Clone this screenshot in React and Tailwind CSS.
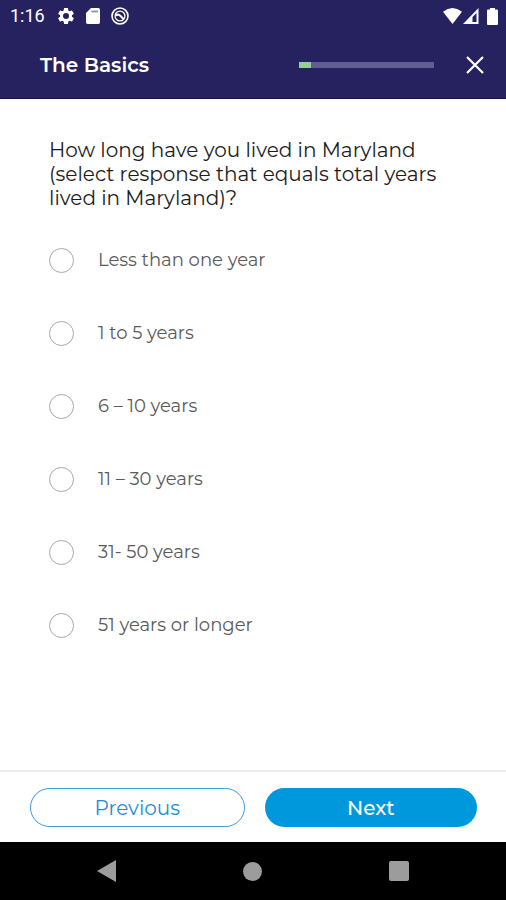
import React, { useState } from "react";

const OPTIONS = [
  "Less than one year",
  "1 to 5 years",
  "6 – 10 years",
  "11 – 30 years",
  "31- 50 years",
  "51 years or longer",
];

function StatusBar() {
  return (
    <div className="flex h-8 items-center justify-between pl-[10px] pr-2">
      <div className="flex items-center">
        <span className="w-[46px] font-[Roboto,sans-serif] text-[18px] leading-8">1:16</span>
        <svg className="size-5" viewBox="0 0 24 24" fill="currentColor" aria-hidden="true">
          <path d="M19.14 12.94c.04-.3.06-.61.06-.94 0-.32-.02-.64-.07-.94l2.03-1.58a.49.49 0 0 0 .12-.61l-1.92-3.32a.49.49 0 0 0-.59-.22l-2.39.96a7 7 0 0 0-1.62-.94l-.36-2.54a.48.48 0 0 0-.48-.41h-3.84c-.24 0-.43.17-.47.41l-.36 2.54c-.59.24-1.13.57-1.62.94l-2.39-.96a.48.48 0 0 0-.59.22L2.74 8.87c-.12.21-.08.47.12.61l2.03 1.58c-.05.3-.09.63-.09.94s.02.64.07.94l-2.03 1.58a.49.49 0 0 0-.12.61l1.92 3.32c.12.22.37.29.59.22l2.39-.96c.5.38 1.03.7 1.62.94l.36 2.54c.05.24.24.41.48.41h3.84c.24 0 .44-.17.47-.41l.36-2.54c.59-.24 1.13-.56 1.62-.94l2.39.96c.22.08.47 0 .59-.22l1.92-3.32a.49.49 0 0 0-.12-.61zM12 15.6a3.6 3.6 0 1 1 0-7.2 3.6 3.6 0 0 1 0 7.2z" />
        </svg>
        <svg className="ml-[10px] h-4 w-[14px]" viewBox="0 0 14 16" aria-hidden="true">
          <path d="M5 0h7.300q1.700 0 1.700 1.700v12.600q0 1.700-1.700 1.700H1.700Q0 16 0 14.300V5z" fill="currentColor" />
          <path d="M5.500 3.500h6.500" stroke="#8f8eb2" strokeWidth="1.800" />
        </svg>
        <svg className="ml-[11px] size-[18px]" viewBox="0 0 18 18" fill="none" stroke="currentColor" aria-hidden="true">
          <circle cx="9" cy="9" r="8" strokeWidth="1.600" />
          <circle cx="9" cy="9" r="4.900" strokeWidth="1.300" />
          <path d="M4.500 8.500Q7.500 6.500 9.500 9L13 12.500" strokeWidth="2" />
        </svg>
      </div>
      <div className="flex items-center">
        <svg className="h-4 w-[19px]" viewBox="0 0 19 16" fill="currentColor" aria-hidden="true">
          <path d="M0 3.700Q9.500-3.500 19 3.700L9.500 16z" />
        </svg>
        <svg className="ml-px size-4" viewBox="0 0 16 16" aria-hidden="true">
          <path d="M15.500 0v16H0z" fill="currentColor" />
          <path d="M13.500 5v9H9.500V9z" fill="#25225f" />
        </svg>
        <svg className="ml-2 h-[17px] w-[11px]" viewBox="0 0 11 17" fill="currentColor" aria-hidden="true">
          <path d="M3 0h5v1.500H10q1 0 1 1V16q0 1-1 1H1q-1 0-1-1V2.500q0-1 1-1h2z" />
        </svg>
      </div>
    </div>
  );
}

function AppBar() {
  return (
    <div className="flex h-[66px] items-center pl-10 pr-[22px]">
      <h1 className="flex-1 text-[20px] font-semibold leading-6">The Basics</h1>
      <div
        className="h-[6px] w-[135px] bg-[#605d93]"
        role="progressbar"
        aria-label="Survey progress"
        aria-valuemin={0}
        aria-valuemax={100}
        aria-valuenow={9}
      >
        <div className="h-full w-[12px] bg-[#8fd293]" />
      </div>
      <button type="button" aria-label="Close" className="ml-8 flex size-[18px] items-center justify-center">
        <svg className="size-[18px]" viewBox="0 0 18 18" fill="none" stroke="currentColor" strokeWidth="2.200" aria-hidden="true">
          <path d="M1 1l16 16M17 1L1 17" />
        </svg>
      </button>
    </div>
  );
}

export default function App() {
  const [answer, setAnswer] = useState(null);
  return (
    <div className="flex min-h-screen flex-col bg-white font-[Montserrat,Inter,sans-serif]">
      <header className="border-b border-[#17134f] bg-[#25225f] text-white">
        <StatusBar />
        <AppBar />
      </header>

      <main className="flex-1 px-[49px] pt-[39px]">
        <fieldset>
          <legend className="text-[20px] leading-6 text-[#1c1c1c]">
            How long have you lived in Maryland
            <br />
            (select response that equals total years
            <br />
            lived in Maryland)?
          </legend>
          <div className="flex flex-col gap-[47px] pt-[37px]">
            {OPTIONS.map((option) => (
              <label key={option} className="flex items-center gap-6 text-[18px] leading-[26px] text-[#5a5a5a]">
                <input
                  type="radio"
                  name="residency"
                  value={option}
                  checked={answer === option}
                  onChange={() => setAnswer(option)}
                  className="size-[25px] shrink-0 appearance-none rounded-full border border-[#a9a9a9] bg-white checked:border-8 checked:border-[#0098dd]"
                />
                {option}
              </label>
            ))}
          </div>
        </fieldset>
      </main>

      <footer className="flex h-[72px] gap-5 border-t-2 border-[#ececec] pl-[30px] pr-[29px] pt-4">
        <button type="button" className="h-[39px] flex-1 rounded-full border border-[#3c9bdc] text-[20px] leading-6 text-[#1c8fd6]">
          Previous
        </button>
        <button type="button" className="h-[39px] flex-1 rounded-full bg-[#0098dd] text-[20px] font-medium leading-6 text-white">
          Next
        </button>
      </footer>

      <nav aria-label="System" className="flex h-[58px] items-center justify-between bg-black px-[97px] text-[#9c9c9c]">
        <button type="button" aria-label="Back">
          <svg className="h-[22px] w-[19px]" viewBox="0 0 19 22" fill="currentColor" aria-hidden="true">
            <path d="M19 0v22L0 11z" />
          </svg>
        </button>
        <button type="button" aria-label="Home" className="size-[19px] rounded-full bg-[#9c9c9c]" />
        <button type="button" aria-label="Overview" className="size-5 rounded-xs bg-[#9c9c9c]" />
      </nav>
    </div>
  );
}
